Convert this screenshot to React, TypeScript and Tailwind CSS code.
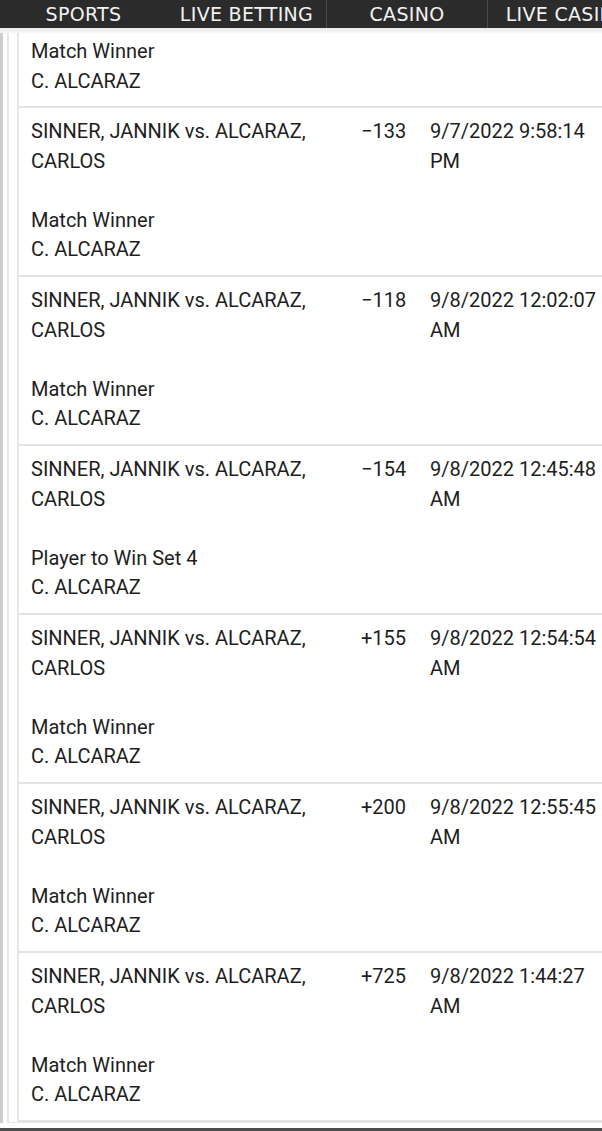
import React from "react";

type Row = { odds: string; d1: string; d2: string; market: string };

const rows: Row[] = [
  { odds: "\u2212133", d1: "9/7/2022 9:58:14", d2: "PM", market: "Match Winner" },
  { odds: "\u2212118", d1: "9/8/2022 12:02:07", d2: "AM", market: "Match Winner" },
  { odds: "\u2212154", d1: "9/8/2022 12:45:48", d2: "AM", market: "Player to Win Set 4" },
  { odds: "+155", d1: "9/8/2022 12:54:54", d2: "AM", market: "Match Winner" },
  { odds: "+200", d1: "9/8/2022 12:55:45", d2: "AM", market: "Match Winner" },
  { odds: "+725", d1: "9/8/2022 1:44:27", d2: "AM", market: "Match Winner" },
];

const navFont = { fontFamily: '"DejaVu Sans", Verdana, sans-serif' };

export default function App() {
  return (
    <div
      className="w-[602px] h-[1131px] overflow-hidden bg-white flex flex-col text-[20px] leading-[29.5px] text-[#1e1e1e]"
      style={{ fontFamily: 'Roboto, "Liberation Sans", Arial, sans-serif' }}
    >
      {/* top navigation */}
      <nav
        className="flex h-[28px] shrink-0 w-[720px] bg-[#2b2b2b] text-[#f2f2f2] text-[19px] tracking-[0.3px] leading-[27px]"
        style={navFont}
      >
        <div className="w-[167px] flex items-center justify-center">SPORTS</div>
        <div className="w-[159px] flex items-center justify-center">LIVE BETTING</div>
        <div className="w-[161px] flex items-center justify-center border-l border-[#4a4a4a]">CASINO</div>
        <div className="w-[160px] flex items-center justify-center border-l border-[#4a4a4a]">LIVE CASINO</div>
      </nav>
      <div className="h-[5px] shrink-0 bg-gradient-to-b from-[#e9e9e9] to-[#f7f7f7]" />

      {/* content frame */}
      <div className="flex-1 border-l-[3px] border-[#cdcdcd] pl-[4px]">
        <div className="border-l-2 border-b border-[#e6e6e6] pl-[8px]">
          <div className="border-l-2 border-[#e6e6e6] w-[720px]">
            {/* partial first row */}
            <div className="pl-[12px] pt-[4px] pb-[10px]">
              <div>Match Winner</div>
              <div>C. ALCARAZ</div>
            </div>
            {rows.map((r, i) => (
              <div
                key={i}
                className={
                  "flex border-t-2 border-[#e3e3e3] pl-[12px] pt-[9px] pb-[10.5px]" +
                  (i === rows.length - 1 ? " border-b-2" : "")
                }
              >
                <div className="w-[330px] shrink-0">
                  <div>SINNER, JANNIK vs. ALCARAZ,</div>
                  <div>CARLOS</div>
                  <div className="h-[29.5px]" />
                  <div>{r.market}</div>
                  <div>C. ALCARAZ</div>
                </div>
                <div className="w-[69px] shrink-0">{r.odds}</div>
                <div className="w-[172px] shrink-0">
                  <div className="whitespace-nowrap">{r.d1}</div>
                  <div>{r.d2}</div>
                </div>
              </div>
            ))}
          </div>
        </div>
      </div>
      <div className="h-[5px] shrink-0" />
      <div className="h-[3px] shrink-0 bg-[#4d4d4d]" />
    </div>
  );
}
